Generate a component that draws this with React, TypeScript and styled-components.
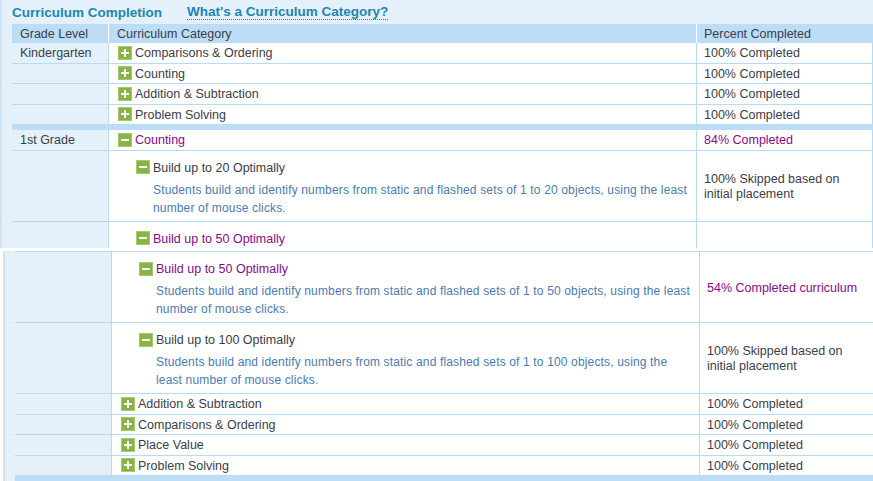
import React from "react"
import styled, { createGlobalStyle } from "styled-components"

const LINE = "#b9daf5"
const HEAD = "#bddcf6"
const PALE = "#e4f1fb"
const PURPLE = "#880a88"
const INK = "#3a3d4a"

const GlobalStyle = createGlobalStyle`
  html, body {
    margin: 0;
    padding: 0;
    background: #ffffff;
    overflow: hidden;
  }
  body {
    font-family: "Liberation Sans", Arial, sans-serif;
    font-size: 12.5px;
    color: ${INK};
  }
  *, *::before, *::after {
    box-sizing: border-box;
  }
`

const Panel = styled.section<{ $shift?: number; $height: number }>`
  margin-left: ${({ $shift }) => $shift ?? 0}px;
  height: ${({ $height }) => $height}px;
  overflow: hidden;
  background: ${PALE};
  border-left: 2px solid #cde3f6;
  padding-left: 10px;

  & + & {
    margin-top: 3px;
  }
`

const TitleBar = styled.div`
  height: 24px;
  display: flex;
  align-items: center;
  gap: 25px;
  font-size: 13.5px;
  font-weight: bold;
  color: #1d85b1;
`

const HelpLink = styled.span`
  line-height: 15px;
  border-bottom: 1px dotted #1d85b1;
  cursor: help;
`

const Table = styled.div<{ $topLine?: boolean }>`
  width: 861px;
  border-top: ${({ $topLine }) => ($topLine ? `1px solid ${LINE}` : "none")};
`

const Row = styled.div`
  display: grid;
  grid-template-columns: 97px 588px 176px;
  border-bottom: 1px solid ${LINE};
`

const HeadRow = styled.div`
  display: grid;
  grid-template-columns: 97px 588px 176px;
  height: 19px;
  background: ${HEAD};
`

const HeadCell = styled.div<{ $pad: number; $last?: boolean }>`
  display: flex;
  align-items: center;
  padding: 1px 0 0 ${({ $pad }) => $pad}px;
  border-right: ${({ $last }) => ($last ? "none" : "1px solid #ffffff")};
`

const GradeCell = styled.div`
  min-height: 19.5px;
  display: flex;
  align-items: center;
  padding: 2px 0 0 8px;
  border-right: 1px solid ${LINE};
  line-height: 15px;
`

const CategoryCell = styled.div<{ $depth: number }>`
  background: #ffffff;
  border-right: 1px solid ${LINE};
  padding: ${({ $depth }) => ($depth ? "8px 5px 4px 27px" : "1px 5px 0 9px")};
  display: flex;
  flex-direction: column;
  justify-content: center;
`

const PercentCell = styled.div<{ $active?: boolean }>`
  background: #ffffff;
  border-right: 1px solid ${LINE};
  padding: 2px 10px 0 7px;
  display: flex;
  align-items: center;
  line-height: 15px;
  color: ${({ $active }) => ($active ? PURPLE : INK)};
`

const Label = styled.div<{ $active?: boolean }>`
  display: flex;
  align-items: center;
  gap: 3px;
  line-height: 18px;
  color: ${({ $active }) => ($active ? PURPLE : INK)};

  svg {
    flex: none;
    margin-top: -1px;
  }
`

const Description = styled.p`
  margin: 4px 0 0 17px;
  font-size: 12px;
  letter-spacing: 0.15px;
  line-height: 18px;
  color: #4a7bb5;
`

const Band = styled.div`
  width: 861px;
  height: 5px;
  background: ${HEAD};
`

function ToggleIcon({ open }: { open?: boolean }) {
  return (
    <svg width="14" height="14" viewBox="0 0 14 14">
      <rect x="0.5" y="0.5" width="13" height="13" fill="#88b444" stroke="#a7c977" />
      <rect x="3" y="6" width="8" height="2" fill="#ffffff" />
      {!open && <rect x="6" y="3" width="2" height="8" fill="#ffffff" />}
    </svg>
  )
}

type Item =
  | { band: true }
  | {
      band?: false
      grade?: string
      label: string
      percent?: string
      depth?: number
      open?: boolean
      active?: boolean
      percentActive?: boolean
      desc?: string
    }

const blurb = (n: number) =>
  `Students build and identify numbers from static and flashed sets of 1 to ${n} objects, using the least number of mouse clicks.`

const SKIPPED = "100% Skipped based on initial placement"

// upper view ends where the "Build up to 50" row is cut off
const upperRows: Item[] = [
  { grade: "Kindergarten", label: "Comparisons & Ordering", percent: "100% Completed" },
  { label: "Counting", percent: "100% Completed" },
  { label: "Addition & Subtraction", percent: "100% Completed" },
  { label: "Problem Solving", percent: "100% Completed" },
  { band: true },
  { grade: "1st Grade", label: "Counting", percent: "84% Completed", open: true, active: true, percentActive: true },
  { label: "Build up to 20 Optimally", depth: 1, open: true, desc: blurb(20), percent: SKIPPED },
  { label: "Build up to 50 Optimally", depth: 1, open: true, active: true },
]

const lowerRows: Item[] = [
  { label: "Build up to 50 Optimally", depth: 1, open: true, active: true, desc: blurb(50), percent: "54% Completed curriculum", percentActive: true },
  { label: "Build up to 100 Optimally", depth: 1, open: true, desc: blurb(100), percent: SKIPPED },
  { label: "Addition & Subtraction", percent: "100% Completed" },
  { label: "Comparisons & Ordering", percent: "100% Completed" },
  { label: "Place Value", percent: "100% Completed" },
  { label: "Problem Solving", percent: "100% Completed" },
  { band: true },
]

function Rows({ items }: { items: Item[] }) {
  return (
    <>
      {items.map((item, i) => {
        if (item.band) return <Band key={i} />
        const depth = item.depth ?? 0
        return (
          <Row key={i}>
            <GradeCell>{item.grade}</GradeCell>
            <CategoryCell $depth={depth}>
              <Label $active={item.active}>
                <ToggleIcon open={item.open} />
                {item.label}
              </Label>
              {item.desc && <Description>{item.desc}</Description>}
            </CategoryCell>
            <PercentCell $active={item.percentActive}>{item.percent}</PercentCell>
          </Row>
        )
      })}
    </>
  )
}

export default function App() {
  return (
    <>
      <GlobalStyle />
      <Panel $height={248}>
        <TitleBar>
          <span>Curriculum Completion</span>
          <HelpLink>What's a Curriculum Category?</HelpLink>
        </TitleBar>
        <Table>
          <HeadRow>
            <HeadCell $pad={8}>Grade Level</HeadCell>
            <HeadCell $pad={8}>Curriculum Category</HeadCell>
            <HeadCell $pad={7} $last>Percent Completed</HeadCell>
          </HeadRow>
          <Rows items={upperRows} />
        </Table>
      </Panel>
      <Panel $shift={3} $height={230}>
        <Table $topLine>
          <Rows items={lowerRows} />
        </Table>
      </Panel>
    </>
  )
}
